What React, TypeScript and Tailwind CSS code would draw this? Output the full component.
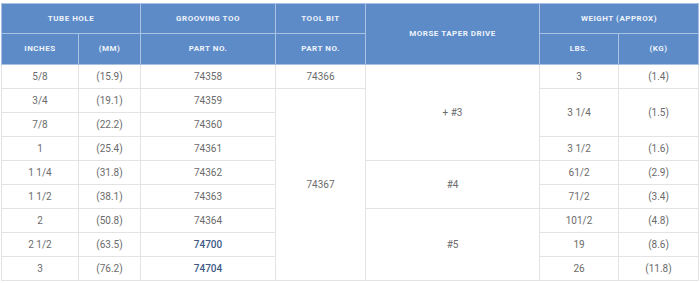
import React from "react";

const H = "border border-[#a9c1e3] bg-[#5d8bc8] text-[#eef3fb] font-bold text-[8px] tracking-[0.5px] uppercase text-center align-middle p-0";
const D = "border border-[#e3e3e3] text-[#6b6b6b] text-[10px] text-center align-middle p-0 h-[24px]";
const L = "border border-[#e3e3e3] text-[#3d5a86] font-medium text-[10px] text-center align-middle p-0 h-[24px]";

export default function App() {
  const rows: { inch: string; mm: string; part: string; link?: boolean }[] = [
    { inch: "5/8", mm: "(15.9)", part: "74358" },
    { inch: "3/4", mm: "(19.1)", part: "74359" },
    { inch: "7/8", mm: "(22.2)", part: "74360" },
    { inch: "1", mm: "(25.4)", part: "74361" },
    { inch: "1 1/4", mm: "(31.8)", part: "74362" },
    { inch: "1 1/2", mm: "(38.1)", part: "74363" },
    { inch: "2", mm: "(50.8)", part: "74364" },
    { inch: "2 1/2", mm: "(63.5)", part: "74700", link: true },
    { inch: "3", mm: "(76.2)", part: "74704", link: true },
  ];
  const extra: React.ReactNode[][] = [
    [
      <td key="t" className={D}>74366</td>,
      <td key="m" rowSpan={4} className={D}>+ #3</td>,
      <td key="l" className={D}>3</td>,
      <td key="k" className={D}>(1.4)</td>,
    ],
    [
      <td key="t" rowSpan={8} className={D}>74367</td>,
      <td key="l" rowSpan={2} className={D}>3 1/4</td>,
      <td key="k" rowSpan={2} className={D}>(1.5)</td>,
    ],
    [],
    [
      <td key="l" className={D}>3 1/2</td>,
      <td key="k" className={D}>(1.6)</td>,
    ],
    [
      <td key="m" rowSpan={2} className={D}>#4</td>,
      <td key="l" className={D}>61/2</td>,
      <td key="k" className={D}>(2.9)</td>,
    ],
    [
      <td key="l" className={D}>71/2</td>,
      <td key="k" className={D}>(3.4)</td>,
    ],
    [
      <td key="m" rowSpan={3} className={D}>#5</td>,
      <td key="l" className={D}>101/2</td>,
      <td key="k" className={D}>(4.8)</td>,
    ],
    [
      <td key="l" className={D}>19</td>,
      <td key="k" className={D}>(8.6)</td>,
    ],
    [
      <td key="l" className={D}>26</td>,
      <td key="k" className={D}>(11.8)</td>,
    ],
  ];
  return (
    <div className="w-[700px] h-[283px] bg-white pt-[3px] pl-[1px]" style={{ fontFamily: "Roboto, 'Noto Sans', sans-serif" }}>
      <table className="border-collapse table-fixed w-[697px]">
        <colgroup>
          <col className="w-[77px]" />
          <col className="w-[62px]" />
          <col className="w-[135px]" />
          <col className="w-[90px]" />
          <col className="w-[174px]" />
          <col className="w-[79px]" />
          <col className="w-[80px]" />
        </colgroup>
        <thead>
          <tr className="h-[30px]">
            <th colSpan={2} className={H}>Tube Hole</th>
            <th className={H}>Grooving Too</th>
            <th className={H}>Tool Bit</th>
            <th rowSpan={2} className={H}>Morse Taper Drive</th>
            <th colSpan={2} className={H}>Weight (Approx)</th>
          </tr>
          <tr className="h-[31px]">
            <th className={H}>Inches</th>
            <th className={H}>(MM)</th>
            <th className={H}>Part No.</th>
            <th className={H}>Part No.</th>
            <th className={H}>LBS.</th>
            <th className={H}>(KG)</th>
          </tr>
        </thead>
        <tbody>
          {rows.map((r, i) => (
            <tr key={i}>
              <td className={D}>{r.inch}</td>
              <td className={D}>{r.mm}</td>
              <td className={r.link ? L : D}>{r.part}</td>
              {extra[i]}
            </tr>
          ))}
        </tbody>
      </table>
    </div>
  );
}
